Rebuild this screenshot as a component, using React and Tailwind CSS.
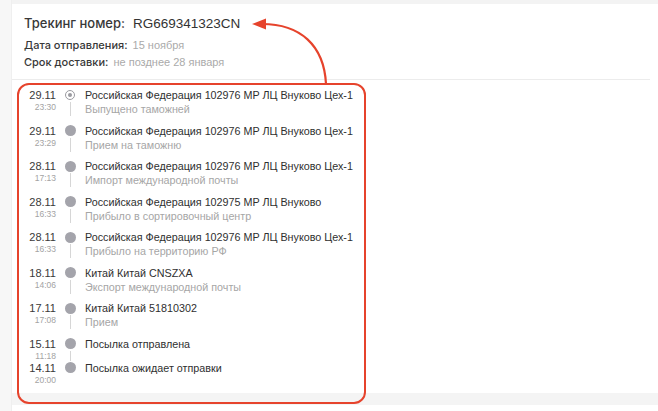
import React from "react";

const events = [
  { d: "29.11", t: "23:30", title: "Российская Федерация 102976 MP ЛЦ Внуково Цех-1", sub: "Выпущено таможней", first: true },
  { d: "29.11", t: "23:29", title: "Российская Федерация 102976 MP ЛЦ Внуково Цех-1", sub: "Прием на таможню" },
  { d: "28.11", t: "17:13", title: "Российская Федерация 102976 MP ЛЦ Внуково Цех-1", sub: "Импорт международной почты" },
  { d: "28.11", t: "16:33", title: "Российская Федерация 102975 MP ЛЦ Внуково", sub: "Прибыло в сортировочный центр" },
  { d: "28.11", t: "16:33", title: "Российская Федерация 102976 MP ЛЦ Внуково Цех-1", sub: "Прибыло на территорию РФ" },
  { d: "18.11", t: "14:06", title: "Китай Китай CNSZXA", sub: "Экспорт международной почты" },
  { d: "17.11", t: "17:08", title: "Китай Китай 51810302", sub: "Прием" },
  { d: "15.11", t: "11:18", title: "Посылка отправлена" },
  { d: "14.11", t: "20:00", title: "Посылка ожидает отправки", last: true },
];

function Row({ e }) {
  return (
    <div className={`flex ${e.sub ? "pb-[7.5px]" : ""}`}>
      <div className="w-[44px] flex flex-col items-end">
        <div className="text-[11px] leading-[14px] text-[#3a3a3a]">{e.d}</div>
        <div className="text-[8.5px] leading-[10px] text-[#a3a3a3]">{e.t}</div>
      </div>
      <div className="w-[18px] ml-[5px] flex flex-col items-center">
        <div className="h-[14px] flex items-center">
          {e.first ? (
            <div className="w-[10px] h-[10px] rounded-full border-[1.5px] border-[#9a9aa0] flex items-center justify-center">
              <div className="w-[4px] h-[4px] rounded-full bg-[#9a9aa0]" />
            </div>
          ) : (
            <div className="w-[11px] h-[11px] rounded-full bg-[#a4a4ab]" />
          )}
        </div>
        {!e.last && <div className="flex-1 w-px bg-[#d6d6d6]" />}
      </div>
      <div className="ml-[6px] flex flex-col">
        <div className="text-[10.75px] leading-[14px] text-[#2f2f2f]">{e.title}</div>
        {e.sub && <div className="text-[10.75px] leading-[14px] text-[#a6a6a6]">{e.sub}</div>}
      </div>
    </div>
  );
}

const label = "font-['Inter',sans-serif] font-medium text-[#383838]";

export default function App() {
  return (
    <div
      className="relative w-[658px] h-[411px] overflow-hidden bg-white flex"
      style={{ fontFamily: '"Liberation Sans", Arial, sans-serif' }}
    >
      <div className="w-[12px] bg-[#f7f7f7] border-r border-[#efefef]" />
      <div className="flex-1 flex flex-col">
        <div className="h-[4px] bg-[#f3f3f3]" />
        <div className="pl-[12px] pt-[10px] flex flex-col">
          <div className="text-[13.5px] leading-[18px] text-[#333] flex items-baseline gap-[8px]">
            <span className={`${label} text-[13px]`}>Трекинг номер:</span>
            <span>RG669341323CN</span>
          </div>
          <div className="mt-[5px] text-[11px] leading-[14px] flex items-baseline gap-[5px]">
            <span className={label}>Дата отправления:</span>
            <span className="text-[#aaa]">15 ноября</span>
          </div>
          <div className="mt-[3px] text-[11px] leading-[14px] flex items-baseline gap-[5px]">
            <span className={label}>Срок доставки:</span>
            <span className="text-[#aaa]">не позднее 28 января</span>
          </div>
        </div>
        <div className="mt-[10px] mr-[8px] h-px bg-[#ececec]" />
        <div className="pt-[8px] flex flex-col">
          {events.map((e, i) => (
            <Row key={i} e={e} />
          ))}
        </div>
        <div className="mt-auto mb-[6px] h-[12px] bg-[#f4f4f4]" />
      </div>

      <div className="pointer-events-none absolute left-[17px] top-[83px] w-[349px] h-[321px] rounded-[12px] border-[2.5px] border-[#e6432c]" />
      <svg className="pointer-events-none absolute left-0 top-0" width="658" height="411" viewBox="0 0 658 411">
        <path d="M 326 84 C 324 45, 300 24, 262 24" fill="none" stroke="#e6432c" strokeWidth="2.2" />
        <polygon points="252,24 266,18.5 266,29.5" fill="#e6432c" />
      </svg>
    </div>
  );
}
